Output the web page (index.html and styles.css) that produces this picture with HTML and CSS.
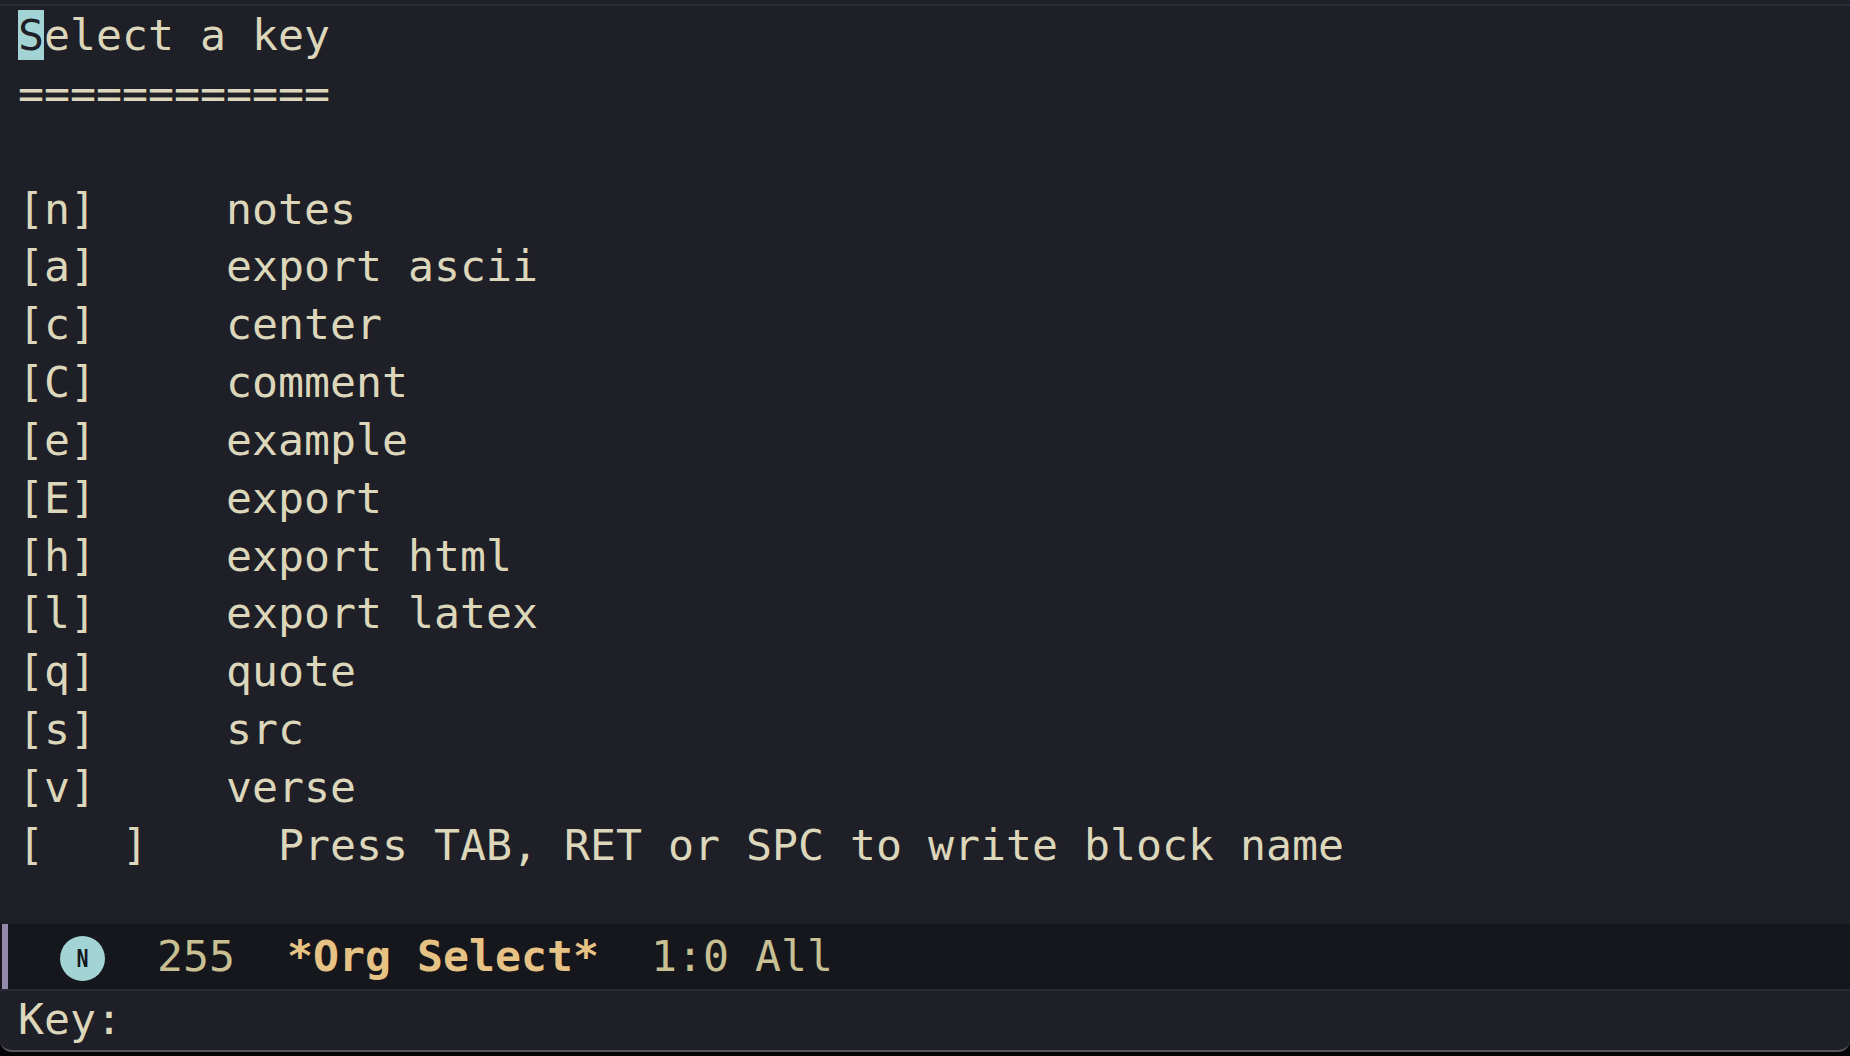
FILE: index.html
```html
<!DOCTYPE html>
<html>
<head>
<meta charset="utf-8">
<link rel="stylesheet" href="styles.css">
</head>
<body>
<div class="window">
  <div class="buffer">
<pre class="text"><span class="cursor">S</span>elect a key
============

[n]     notes
[a]     export ascii
[c]     center
[C]     comment
[e]     example
[E]     export
[h]     export html
[l]     export latex
[q]     quote
[s]     src
[v]     verse
[   ]     Press TAB, RET or SPC to write block name</pre>
  </div>
  <div class="modeline">
    <span class="bar"></span>
    <span class="badge"><span class="badge-letter">N</span></span>
    <pre class="ml-text"><span class="dim">255</span>  <span class="bufname">*Org Select*</span>  <span class="dim">1:0 All</span></pre>
  </div>
  <div class="minibuffer">
    <pre class="text">Key:</pre>
  </div>
</div>
</body>
</html>
```
FILE: styles.css
```css
html, body {
  margin: 0;
  padding: 0;
  background: #050507;
  height: 100%;
  overflow: hidden;
}

.window {
  box-sizing: border-box;
  height: 1052px;
  background: #1f1f28;
  padding-top: 4px;
  display: flex;
  flex-direction: column;
  border-bottom: 2px solid #55555d;
  border-radius: 0 0 12px 12px;
  overflow: hidden;
}

pre {
  margin: 0;
  font-family: "DejaVu Sans Mono", "Liberation Mono", monospace;
  font-size: 43.2px;
  line-height: 57.85px;
  color: #dcd7ba;
}

.buffer {
  flex: 1;
  border-top: 2px solid #2a2a37;
  padding-left: 18px;
  padding-top: 1px;
}

.cursor {
  background: #a3d4d5;
  color: #1f1f28;
}

.modeline {
  height: 65px;
  flex: none;
  background: #16161d;
  display: flex;
  align-items: center;
  border-bottom: 2px solid #2a2a37;
}

.bar {
  align-self: stretch;
  width: 6px;
  margin-left: 2px;
  background: #938aa9;
}

.badge {
  width: 45px;
  height: 45px;
  border-radius: 50%;
  background: #a3d4d5;
  color: #16161d;
  display: flex;
  align-items: center;
  justify-content: center;
  margin-left: 52px;
  margin-top: 4px;
}

.badge-letter {
  font-family: "DejaVu Sans Mono", monospace;
  font-weight: bold;
  font-size: 25px;
  display: inline-block;
  transform: scaleX(0.8);
}

.ml-text {
  margin-left: 52px;
  line-height: 65px;
}

.dim {
  color: #c8c093;
}

.bufname {
  color: #e6c384;
  font-weight: bold;
}

.minibuffer {
  flex: none;
  height: 59px;
  padding-left: 18px;
}
```
